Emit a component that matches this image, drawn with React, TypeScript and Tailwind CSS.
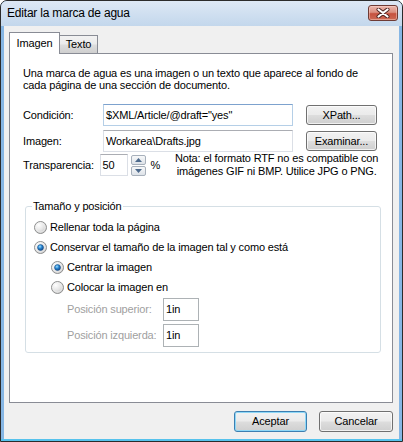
import React, { useId } from 'react';

const TXT = 'text-[11px] leading-[13px] tracking-[-0.15px]';

const btnBg =
  'bg-[linear-gradient(to_bottom,#f2f2f2_0%,#ebebeb_48%,#dddddd_52%,#cfcfcf_100%)]';

const Win7Button: React.FC<{ children: React.ReactNode; primary?: boolean; className?: string }> = ({
  children,
  primary,
  className = '',
}) => (
  <button
    className={`${btnBg} ${TXT} rounded-[3px] border text-black flex items-center justify-center ${
      primary
        ? 'border-[#3c7fb1] shadow-[inset_0_0_0_1px_#8fd8f7]'
        : 'border-[#707070] shadow-[inset_0_0_0_1px_rgba(255,255,255,0.7)]'
    } ${className}`}
  >
    {children}
  </button>
);

const TextBox: React.FC<{ value: string; className?: string; focused?: boolean }> = ({
  value,
  className = '',
  focused,
}) => (
  <div
    className={`bg-white border flex items-center px-[2px] ${TXT} text-black whitespace-nowrap overflow-hidden ${
      focused
        ? 'border-[#b5cfe7] border-t-[#7da2ce]'
        : 'border-[#dbdfe6] border-t-[#abadb3]'
    } ${className}`}
  >
    {value}
  </div>
);

const Radio: React.FC<{ checked?: boolean }> = ({ checked }) => {
  const id = useId().replace(/:/g, '');
  return (
    <svg width="13" height="13" viewBox="0 0 13 13" className="shrink-0">
      <defs>
        <radialGradient id={`f${id}`} cx="0.35" cy="0.3" r="0.75">
          <stop offset="0" stopColor="#ffffff" />
          <stop offset="0.55" stopColor="#e6e6e6" />
          <stop offset="1" stopColor="#c4c4c4" />
        </radialGradient>
        <radialGradient id={`d${id}`} cx="0.4" cy="0.35" r="0.7">
          <stop offset="0" stopColor="#9ee0ff" />
          <stop offset="0.45" stopColor="#2a86d0" />
          <stop offset="1" stopColor="#0d3f80" />
        </radialGradient>
      </defs>
      <circle cx="6.5" cy="6.5" r="6" fill={`url(#f${id})`} stroke="#8e8f8f" strokeWidth="1" />
      <circle cx="6.5" cy="6.5" r="4.6" fill="none" stroke="#f4f4f4" strokeWidth="0.8" opacity="0.8" />
      {checked && <circle cx="6.5" cy="6.5" r="3" fill={`url(#d${id})`} stroke="#1b4f86" strokeWidth="0.5" />}
    </svg>
  );
};

const SpinButton: React.FC<{ up?: boolean }> = ({ up }) => (
  <div className="w-[15px] h-[10px] rounded-[2px] border border-[#a7b0bb] bg-[linear-gradient(to_bottom,#f7f8f9,#dde2e8)] flex items-center justify-center">
    <svg width="7" height="4" viewBox="0 0 7 4">
      {up ? <polygon points="0,4 7,4 3.5,0" fill="#4d6a8c" /> : <polygon points="0,0 7,0 3.5,4" fill="#4d6a8c" />}
    </svg>
  </div>
);

export default function App() {
  return (
    <div className="w-[403px] h-[442px] flex flex-col border border-[#2b2b2b] rounded-t-[7px] overflow-hidden bg-[#86b6e4] font-['Liberation_Sans',Arial,sans-serif] text-black select-none">
      {/* title bar */}
      <div className="h-[25px] shrink-0 flex items-start justify-between pl-[6px] pr-[4px] bg-[linear-gradient(to_bottom,#dde8f5,#c3d7ec)]">
        <span className="mt-[5px] text-[12px] leading-[15px] tracking-[-0.2px] text-black">
          Editar la marca de agua
        </span>
        <div className="mt-[4px] w-[30px] h-[16px] rounded-[3px] border border-[#6e3b35] bg-[linear-gradient(to_bottom,#ebb7ad_0%,#db8f80_45%,#c6513f_55%,#cd6a55_100%)] shadow-[inset_0_0_0_1px_rgba(255,220,210,0.45)] flex items-center justify-center">
          <svg width="14" height="10" viewBox="0 0 14 10">
            <path d="M2.5 1.5 L11.5 8.5 M11.5 1.5 L2.5 8.5" stroke="#4b2320" strokeWidth="4" strokeLinecap="round" />
            <path d="M2.5 1.5 L11.5 8.5 M11.5 1.5 L2.5 8.5" stroke="#ffffff" strokeWidth="2.2" strokeLinecap="round" />
          </svg>
        </div>
      </div>

      {/* client */}
      <div className="flex-1 mx-[3px] bg-[#f0f0f0] flex flex-col">
        {/* tabs */}
        <div className="flex items-end pt-[6px] pl-[5px]">
          <div className={`relative z-10 -mb-[1px] w-[51px] h-[22px] bg-white border border-b-0 border-[#898c95] flex items-center justify-center pb-[1px] ${TXT}`}>
            Imagen
          </div>
          <div className={`w-[38px] h-[18px] border-t border-r border-[#898c95] ${btnBg} flex items-center justify-center ${TXT}`}>
            Texto
          </div>
        </div>

        {/* panel */}
        <div className="ml-[5px] w-[384px] h-[350px] bg-white border border-[#898c95] flex flex-col">
          <div className="px-[13px]">
            <p className={`mt-[13px] text-[11px] leading-[12px] tracking-[-0.15px]`}>
              Una marca de agua es una imagen o un texto que aparece al fondo de
              <br />
              cada página de una sección de documento.
            </p>

            <div className="mt-[13px] flex items-center h-[22px]">
              <span className={`w-[80px] ${TXT}`}>Condición:</span>
              <TextBox value={'$XML/Article/@draft="yes"'} className="w-[190px] h-[22px]" focused />
              <Win7Button className="ml-[13px] w-[71px] h-[20px]">XPath...</Win7Button>
            </div>

            <div className="mt-[4px] flex items-center h-[22px]">
              <span className={`w-[80px] ${TXT}`}>Imagen:</span>
              <TextBox value={'Workarea\\Drafts.jpg'} className="w-[190px] h-[22px]" />
              <Win7Button className="ml-[13px] w-[71px] h-[20px]">Examinar...</Win7Button>
            </div>

            <div className="flex items-center h-[26px]">
              <span className={`w-[80px] ${TXT}`}>Transparencia:</span>
              <TextBox value="50" className="w-[29px] h-[22px]" />
              <div className="ml-[3px] flex flex-col gap-[1px]">
                <SpinButton up />
                <SpinButton />
              </div>
              <span className={`ml-[5px] ${TXT}`}>%</span>
              <div className={`ml-[14px] w-[214px] text-center whitespace-nowrap ${TXT}`}>
                Nota: el formato RTF no es compatible con
                <br />
                imágenes GIF ni BMP. Utilice JPG o PNG.
              </div>
            </div>
          </div>

          <fieldset className="mt-[22px] ml-[15px] w-[356px] border border-[#d5dfe5] rounded-[3px] p-0 m-0 min-w-0">
            <legend className={`ml-[6px] px-[1px] ${TXT}`}>Tamaño y posición</legend>
            <div className="flex flex-col pt-[4px] pb-[5px]">
              <div className="h-[20px] flex items-center gap-[3px] pl-[8px]">
                <Radio />
                <span className={TXT}>Rellenar toda la página</span>
              </div>
              <div className="h-[20px] flex items-center gap-[3px] pl-[8px]">
                <Radio checked />
                <span className={TXT}>Conservar el tamaño de la imagen tal y como está</span>
              </div>
              <div className="h-[20px] flex items-center gap-[3px] pl-[25px]">
                <Radio checked />
                <span className={TXT}>Centrar la imagen</span>
              </div>
              <div className="h-[20px] flex items-center gap-[3px] pl-[25px]">
                <Radio />
                <span className={TXT}>Colocar la imagen en</span>
              </div>
              <div className="mt-[1px] h-[23px] flex items-center pl-[41px]">
                <span className={`w-[96px] text-[#a0a0a0] ${TXT}`}>Posición superior:</span>
                <div className={`w-[36px] h-[23px] bg-white border border-[#adb2b5] px-[2px] flex items-center ${TXT}`}>1in</div>
              </div>
              <div className="mt-[3px] h-[23px] flex items-center pl-[41px]">
                <span className={`w-[96px] text-[#a0a0a0] ${TXT}`}>Posición izquierda:</span>
                <div className={`w-[36px] h-[23px] bg-white border border-[#adb2b5] px-[2px] flex items-center ${TXT}`}>1in</div>
              </div>
            </div>
          </fieldset>
        </div>

        {/* footer buttons */}
        <div className="mt-[8px] flex justify-end gap-[12px] pr-[6px]">
          <Win7Button primary className="w-[73px] h-[21px]">Aceptar</Win7Button>
          <Win7Button className="w-[74px] h-[21px]">Cancelar</Win7Button>
        </div>
      </div>

      <div className="h-[2px] shrink-0 bg-[#56c2ec]" />
    </div>
  );
}
